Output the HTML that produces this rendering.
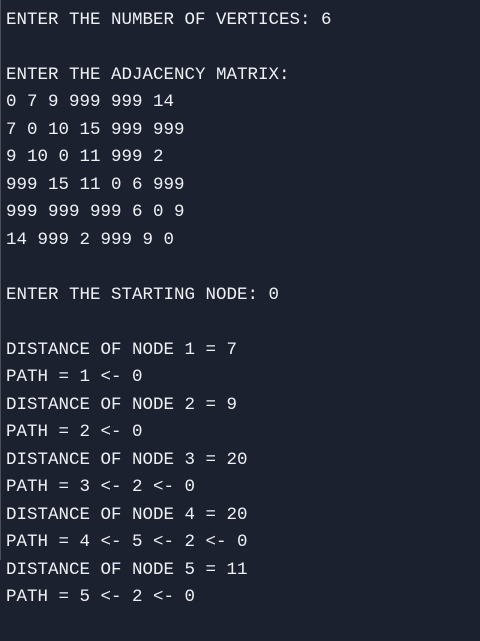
<!DOCTYPE html>
<html><head><style>
html,body{margin:0;padding:0;background:#1c2130;width:480px;height:641px;overflow:hidden}
pre{margin:0;padding:7px 0 0 6px;font-family:"Liberation Mono",monospace;font-size:17.5px;line-height:27.48px;color:#eef0f4;}
.b{position:absolute;left:0;top:0;width:1px;height:560px;background:#4a4f5a}
</style></head><body><div class="b"></div><pre>ENTER THE NUMBER OF VERTICES: 6

ENTER THE ADJACENCY MATRIX:
0 7 9 999 999 14
7 0 10 15 999 999
9 10 0 11 999 2
999 15 11 0 6 999
999 999 999 6 0 9
14 999 2 999 9 0

ENTER THE STARTING NODE: 0

DISTANCE OF NODE 1 = 7
PATH = 1 &lt;- 0
DISTANCE OF NODE 2 = 9
PATH = 2 &lt;- 0
DISTANCE OF NODE 3 = 20
PATH = 3 &lt;- 2 &lt;- 0
DISTANCE OF NODE 4 = 20
PATH = 4 &lt;- 5 &lt;- 2 &lt;- 0
DISTANCE OF NODE 5 = 11
PATH = 5 &lt;- 2 &lt;- 0</pre></body></html>
